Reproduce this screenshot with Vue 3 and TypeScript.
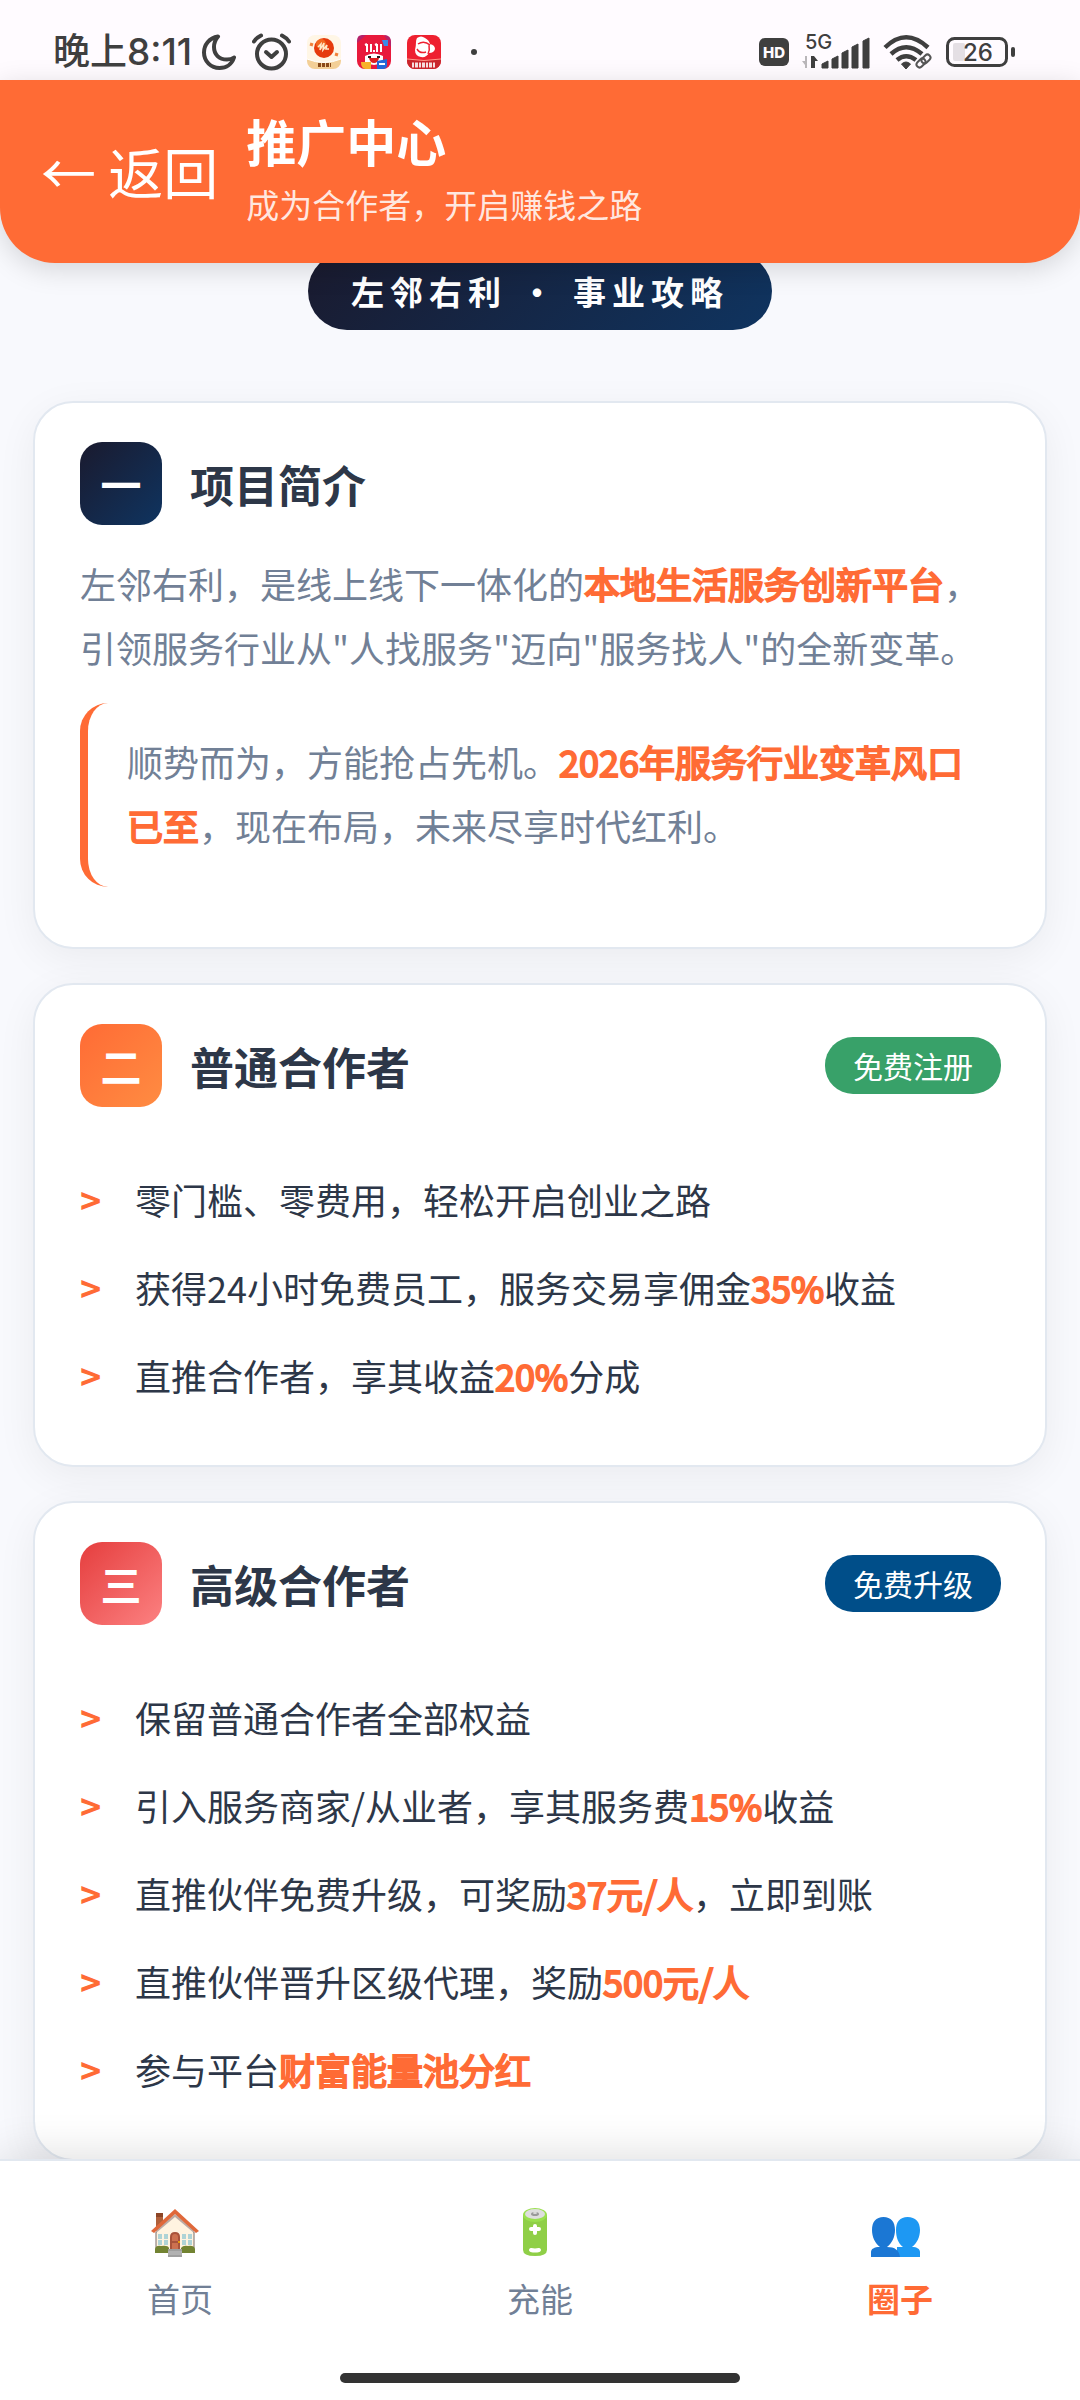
<script setup lang="ts">
interface Part {
  text: string
  strong?: boolean
}

interface PlanCard {
  id: string
  numeral: string
  tone: string
  title: string
  tag: string
  tagTone: string
  items: Part[][]
}

interface NavItem {
  id: string
  label: string
  active: boolean
}

const plans: PlanCard[] = [
  {
    id: 'basic',
    numeral: '二',
    tone: 'orange',
    title: '普通合作者',
    tag: '免费注册',
    tagTone: 'green',
    items: [
      [{ text: '零门槛、零费用，轻松开启创业之路' }],
      [{ text: '获得24小时免费员工，服务交易享佣金' }, { text: '35%', strong: true }, { text: '收益' }],
      [{ text: '直推合作者，享其收益' }, { text: '20%', strong: true }, { text: '分成' }],
    ],
  },
  {
    id: 'advanced',
    numeral: '三',
    tone: 'red',
    title: '高级合作者',
    tag: '免费升级',
    tagTone: 'blue',
    items: [
      [{ text: '保留普通合作者全部权益' }],
      [{ text: '引入服务商家/从业者，享其服务费' }, { text: '15%', strong: true }, { text: '收益' }],
      [{ text: '直推伙伴免费升级，可奖励' }, { text: '37元/人', strong: true }, { text: '，立即到账' }],
      [{ text: '直推伙伴晋升区级代理，奖励' }, { text: '500元/人', strong: true }],
      [{ text: '参与平台' }, { text: '财富能量池分红', strong: true }],
    ],
  },
]

const navItems: NavItem[] = [
  { id: 'home', label: '首页', active: false },
  { id: 'charge', label: '充能', active: false },
  { id: 'circle', label: '圈子', active: true },
]
</script>

<template>
  <div class="app">
    <div class="top">
      <div class="status">
        <div class="status-side">
          <span class="time">晚上8:11</span>
          <svg width="34" height="36" viewBox="0 0 34 36" aria-hidden="true">
            <path d="M16 2.5C7 4 2 11 2 18.500c0 9 7 15.500 15.500 15.500 7 0 12.500-4 14.500-10.500-2 1.500-4.500 2-7 2C17 25.500 12 20.500 12 13c0-4 1.500-7.500 4-10.500z" fill="none" stroke="#3f3f3f" stroke-width="4" stroke-linejoin="round" />
          </svg>
          <svg width="39" height="38" viewBox="0 0 39 38" fill="none" stroke="#3f3f3f" stroke-linecap="round" aria-hidden="true">
            <circle cx="19.500" cy="21" r="14.500" stroke-width="4" />
            <path d="M2 8.500C4 5.500 6 4 9 2.500M30 2.500C33 4 35 5.500 37 8.500" stroke-width="4" />
            <path d="M14 19l5.500 5 5.500-5" stroke-width="4" stroke-linejoin="round" />
          </svg>
          <svg width="34" height="34" viewBox="0 0 34 34" aria-hidden="true">
            <rect width="34" height="34" rx="8" fill="#fff6e6" />
            <path d="M0 24q17 7 34 0v2a8 8 0 0 1-8 8H8a8 8 0 0 1-8-8z" fill="#f3cf97" />
            <path d="M0 24q17 7 34 0" fill="none" stroke="#fff" stroke-width="1" />
            <circle cx="17" cy="13" r="10" fill="#e63a0c" />
            <circle cx="14" cy="9" r="5" fill="#f67a28" opacity=".7" />
            <path d="M11 12l3-3-1 6 4-7-1 7 4-5-1 4h3" fill="none" stroke="#ffe8c8" stroke-width="1.500" />
            <path d="M3 9l3 1M28 19l3 1" stroke="#f0803a" stroke-width="3" />
            <path d="M11 30h13" stroke="#8a4a1a" stroke-width="4" stroke-dasharray="3 1" />
          </svg>
          <svg width="34" height="34" viewBox="0 0 34 34" aria-hidden="true">
            <rect width="34" height="34" rx="8" fill="#e8193c" />
            <path d="M0 8L9 0H5Q0 0 0 6zM27 0l7 12V7q0-7-7-7z" fill="#b5226a" />
            <path d="M25 5h6v6h-4z" fill="#3a8be8" />
            <path d="M10 9v8M14 9v8M20 9v8M24 9v8M17 15v2M8 10l2-1M18 10l2-1" stroke="#fff" stroke-width="2" />
            <path d="M8 21q9-5 18 0v6q-9 6-18 0z" fill="#fff" />
            <path d="M12 23h10q-1 5-5 5t-5-5z" fill="#d22" />
            <path d="M11 22h3M20 22h3" stroke="#222" stroke-width="2" />
            <path d="M4 27h10v7H8q-4-1-4-7z" fill="#f7b32b" />
            <path d="M20 26l10-2v7q-1 3-4 3h-6z" fill="#2468d8" />
            <path d="M22 29h6" stroke="#fff" stroke-width="2" />
          </svg>
          <svg width="34" height="34" viewBox="0 0 34 34" aria-hidden="true">
            <rect width="34" height="34" rx="8" fill="#ee2030" />
            <path d="M0 24q17 3 34 0v2a8 8 0 0 1-8 8H8a8 8 0 0 1-8-8z" fill="#c9252c" />
            <path d="M0 24q17 3 34 0" fill="none" stroke="#ff9a8a" stroke-width="1" />
            <path d="M10 3q4-3 8 0 4 2 5 6 5 1 5 5-1 4-6 4-3 5-8 4-6-1-6-7 1-4 1-8 0-2 1-4z" fill="#fff" />
            <path d="M11 9q6-4 12 1M10 14q3 5 9 3M21 19q2-4 1-9" fill="none" stroke="#ee2030" stroke-width="1.500" />
            <path d="M5 30h24" stroke="#fff" stroke-width="5" stroke-dasharray="2 1 3 1" opacity=".85" />
          </svg>
          <i class="more"></i>
        </div>
        <div class="status-side right">
          <svg width="30" height="28" viewBox="0 0 30 28" aria-hidden="true">
            <rect width="30" height="28" rx="6" fill="#3f3f3f" />
            <text x="15" y="20" text-anchor="middle" class="hd">HD</text>
          </svg>
          <svg width="68" height="48" viewBox="0 0 68 48" aria-hidden="true">
            <text x="3" y="21" class="net">5G</text>
            <path d="M5 28v12h-2v-3l-3-4h3v-5z" fill="#b9b6b9" />
            <path d="M9 40V28h3l4 5h-3v7z" fill="#3f3f3f" />
            <path d="M20 36l6-3v7h-6zM30 31l6-3v12h-6zM40 25l6-3v18h-6zM50 19l6-3v24h-6zM61 13l6-3v30h-6z" fill="#3f3f3f" stroke="#3f3f3f" stroke-width="1" stroke-linejoin="round" />
          </svg>
          <svg width="50" height="36" viewBox="0 0 50 36" aria-hidden="true">
            <g fill="none" stroke="#3f3f3f" stroke-width="4.500">
              <path d="M2 13.500Q23-7 45 13.500" />
              <path d="M8 20q15-13.500 31 0" />
              <path d="M14 26q9-7.500 19 0" />
            </g>
            <path d="M18.500 30q4.500-4 9 0l-4.500 5z" fill="#3f3f3f" stroke="#3f3f3f" stroke-width="1" />
            <g fill="none" stroke="#fffbff" stroke-width="6">
              <rect x="33" y="27" width="10" height="6" rx="3" transform="rotate(-45 38 30)" />
              <rect x="38" y="22" width="10" height="6" rx="3" transform="rotate(-45 43 25)" />
            </g>
            <g fill="none" stroke="#555" stroke-width="2">
              <rect x="33" y="26" width="10" height="6" rx="3" transform="rotate(-45 38 29)" />
              <rect x="38" y="22" width="10" height="6" rx="3" transform="rotate(-45 43 25)" />
            </g>
          </svg>
          <svg width="69" height="30" viewBox="0 0 69 30" aria-hidden="true">
            <rect x="7" y="6" width="12" height="18" rx="2" fill="#e4dfe4" />
            <rect x="1.500" y="1.500" width="59" height="27" rx="7" fill="none" stroke="#3f3f3f" stroke-width="3" />
            <rect x="65" y="10" width="4" height="10" rx="2" fill="#3f3f3f" />
            <text x="32" y="24" text-anchor="middle" class="level">26</text>
          </svg>
        </div>
      </div>
      <header class="header">
        <button type="button" class="back">← 返回</button>
        <div>
          <h1 class="title">推广中心</h1>
          <p class="subtitle">成为合作者，开启赚钱之路</p>
        </div>
      </header>
    </div>

    <main class="main">
      <div class="pill">左邻右利 • 事业攻略</div>

      <section class="card intro">
        <div class="card-head">
          <span class="badge navy">一</span>
          <h2 class="card-title">项目简介</h2>
        </div>
        <p class="text">左邻右利，是线上线下一体化的<strong>本地生活服务创新平台</strong>，<br />引领服务行业从"人找服务"迈向"服务找人"的全新变革。</p>
        <p class="text quote">顺势而为，方能抢占先机。<strong>2026年服务行业变革风口</strong><br /><strong>已至</strong>，现在布局，未来尽享时代红利。</p>
      </section>

      <section v-for="plan in plans" :key="plan.id" class="card">
        <div class="card-head">
          <span class="badge" :class="plan.tone">{{ plan.numeral }}</span>
          <h2 class="card-title">{{ plan.title }}</h2>
          <span class="tag" :class="plan.tagTone">{{ plan.tag }}</span>
        </div>
        <ul class="list">
          <li v-for="(item, i) in plan.items" :key="i" class="row">
            <span class="marker">&gt;</span>
            <span><span v-for="(part, j) in item" :key="j" :class="{ hot: part.strong }">{{ part.text }}</span></span>
          </li>
        </ul>
      </section>
    </main>

    <nav class="nav">
      <div class="nav-row">
        <a v-for="item in navItems" :key="item.id" href="#" class="nav-item" :class="{ active: item.active }">
          <span class="nav-content">
            <svg v-if="item.id === 'home'" width="56" height="50" viewBox="0 0 56 50" aria-hidden="true">
              <rect x="9" y="5" width="7" height="18" fill="#b0603a" />
              <rect x="9" y="5" width="7" height="4" fill="#8d4526" />
              <path d="M9 22L28 5l19 17v22H9z" fill="#fff3e0" />
              <path d="M9 22L28 6l19 16v3L28 9 9 25z" fill="#bcaaa4" />
              <path d="M9 24v20M47 24v20" stroke="#7a6a66" stroke-width="1" />
              <path d="M11 26h4v5h-4zM17 26h4v5h-4zM11 32h4v5h-4zM17 32h4v5h-4zM35 26h4v5h-4zM41 26h4v5h-4zM35 32h4v5h-4zM41 32h4v5h-4z" fill="#aed3d6" />
              <path d="M23 42V29q0-5 5-5t5 5v13z" fill="#a9533b" />
              <path d="M25 41v-6h6v6zM25 33v-4q0-3 3-3t3 3v4z" fill="#cd7150" />
              <circle cx="32" cy="34" r="1" fill="#ffb300" />
              <path d="M8 45v-4q1-4 6-3 7-1 8 2v5zM34 45v-5q2-3 7-2 6-1 7 3v4z" fill="#728332" />
              <path d="M21 41h14v8H21z" fill="#9e9e9e" />
              <path d="M21 44h14M21 46h14" stroke="#c4c4c4" stroke-width="1" />
              <path d="M4 23L28 1l24 22-3 2L28 6 7 25z" fill="#e0683a" />
            </svg>
            <svg v-else-if="item.id === 'charge'" width="56" height="50" viewBox="0 0 56 50" aria-hidden="true">
              <path d="M16 7v35q0 6 12 6t12-6V7z" fill="#8fcf47" />
              <ellipse cx="28" cy="7" rx="12" ry="7" fill="#9ae04f" />
              <ellipse cx="28" cy="6" rx="10" ry="5" fill="#dedede" />
              <ellipse cx="28" cy="6" rx="4" ry="2" fill="#9a9a9a" />
              <ellipse cx="28" cy="5" rx="2" ry="1" fill="#dedede" />
              <path d="M28 18v7M24 21h8" stroke="#fff" stroke-width="4" stroke-linecap="round" />
              <path d="M24 42q4 1 8 0" fill="none" stroke="#fff" stroke-width="4" stroke-linecap="round" />
            </svg>
            <svg v-else width="56" height="50" viewBox="0 0 56 50" aria-hidden="true">
              <path d="M40.500 9c8 0 12.500 5 12.500 13 0 7-3 13-8 17 5 0 8 2 8 5v5H30V39h6c-5-4-7-10-7-17 0-8 4-13 11.500-13z" fill="#1d98f3" />
              <path d="M16.500 9C24 9 28 14 28 22c0 7-3 13-8 17 8 0 12 3 13 10H4v-5c0-3 3-5 9-5-5-4-8-10-8-17 0-8 4-13 11.500-13z" fill="#1b77d4" />
            </svg>
            <span>{{ item.label }}</span>
          </span>
        </a>
      </div>
      <div class="home-bar"></div>
    </nav>
  </div>
</template>

<style>
body {
  margin: 0;
  background: #f8f9fd;
}
</style>

<style scoped>
.app {
  display: flex;
  flex-direction: column;
  min-height: 100vh;
  font-family: "Noto Sans CJK SC", sans-serif;
  color: #2d3748;
}

.top {
  position: sticky;
  top: 0;
  z-index: 2;
}

.status {
  display: flex;
  justify-content: space-between;
  box-sizing: border-box;
  height: 80px;
  padding: 24px 65px 0 53px;
  background: #fffbff;
}

.status-side {
  display: flex;
  align-items: center;
  gap: 16px;
  height: 56px;
}

.status-side.right {
  gap: 13px;
}

.time {
  margin-right: -6px;
  font: 500 37px/56px Inter, "Noto Sans CJK SC", sans-serif;
  color: #3f3f3f;
}

.more {
  width: 6px;
  height: 6px;
  margin-left: 14px;
  border-radius: 50%;
  background: #3f3f3f;
}

.hd {
  font: 800 15px Inter, sans-serif;
  fill: #fffbff;
}

.net {
  font: 500 20px Inter, sans-serif;
  fill: #3f3f3f;
}

.level {
  font: 500 24px Inter, sans-serif;
  fill: #3f3f3f;
}

.header {
  display: flex;
  align-items: center;
  gap: 28px;
  box-sizing: border-box;
  height: 183px;
  padding: 0 41px 4px;
  border-radius: 0 0 55px 55px;
  background: #ff6b35;
  box-shadow: 0 6px 28px rgba(0, 0, 0, 0.15);
  color: #fff;
}

.back {
  padding: 0;
  border: 0;
  background: none;
  color: inherit;
  font: 400 55px/80px "Noto Sans CJK SC", sans-serif;
  white-space: nowrap;
}

.title {
  margin: 0;
  font-size: 50px;
  line-height: 68px;
  font-weight: 700;
}

.subtitle {
  margin: 0;
  font-size: 33px;
  line-height: 60px;
  color: rgba(255, 255, 255, 0.85);
}

.main {
  display: flex;
  flex-direction: column;
  gap: 34px;
  margin: -11px 0 -10px;
  padding: 0 33px;
}

.pill {
  align-self: center;
  margin-bottom: 37px;
  padding: 0 43px;
  border-radius: 39px;
  background: linear-gradient(135deg, #1a1a2e, #0f3460);
  color: #fff;
  font-size: 33px;
  line-height: 78px;
  font-weight: 700;
  letter-spacing: 6px;
}

.card {
  padding: 39px 44px 46px 45px;
  border: 2px solid #e2e8f0;
  border-radius: 40px;
  background: #fff;
  box-shadow: 0 10px 40px rgba(0, 0, 0, 0.06);
}

.card-head {
  display: flex;
  align-items: center;
}

.badge {
  width: 82px;
  margin-right: 28px;
  border-radius: 22px;
  color: #fff;
  font-size: 41px;
  line-height: 83px;
  font-weight: 700;
  text-align: center;
}

.badge.navy {
  background: linear-gradient(135deg, #1a1a2e, #0f3460);
}

.badge.orange {
  background: linear-gradient(135deg, #ff6b35, #ff8c42);
}

.badge.red {
  background: linear-gradient(135deg, #e53e3e, #fc8181);
}

.card-title {
  margin: 0;
  font-size: 44px;
  line-height: 66px;
  font-weight: 700;
}

.tag {
  margin-left: auto;
  padding: 0 28px;
  border-radius: 28px;
  color: #fff;
  font-size: 30px;
  line-height: 57px;
}

.tag.green {
  background: #38a169;
}

.tag.blue {
  background: #004e89;
}

.text {
  margin: 26px 0 0;
  font-size: 36px;
  line-height: 64px;
  color: #718096;
}

/* Emphasis thickens the regular face so its digits keep their width. */
.text strong,
.hot {
  color: #ff6b35;
  font-weight: 400;
  -webkit-text-stroke: 2px #ff6b35;
}

.quote {
  margin: 24px 0 14px;
  padding: 26px 0 30px 39px;
  border-left: 8px solid #ff6b35;
  border-radius: 28px;
}

.list {
  margin: 48px 0 0;
  padding: 0;
  list-style: none;
}

.row {
  display: flex;
  font-size: 36px;
  line-height: 88px;
}

.marker {
  width: 55px;
  color: #ff6b35;
  font-weight: 700;
}

.nav {
  position: sticky;
  bottom: 0;
  z-index: 2;
  margin-top: auto;
  padding: 47px 0 17px;
  border-top: 2px solid #e2e8f0;
  background: #fff;
  box-shadow: 0 -6px 40px rgba(0, 0, 0, 0.12);
}

.nav-row {
  display: grid;
  grid-template-columns: repeat(3, 1fr);
}

.nav-item {
  display: flex;
  justify-content: center;
  color: #718096;
  font-size: 33px;
  line-height: 44px;
  text-decoration: none;
}

.nav-item.active {
  color: #ff6b35;
  font-weight: 700;
}

.nav-content {
  display: flex;
  flex-direction: column;
  gap: 18px;
}

.home-bar {
  width: 37%;
  height: 10px;
  margin: 53px auto 0;
  border-radius: 5px;
  background: #333;
}
</style>
